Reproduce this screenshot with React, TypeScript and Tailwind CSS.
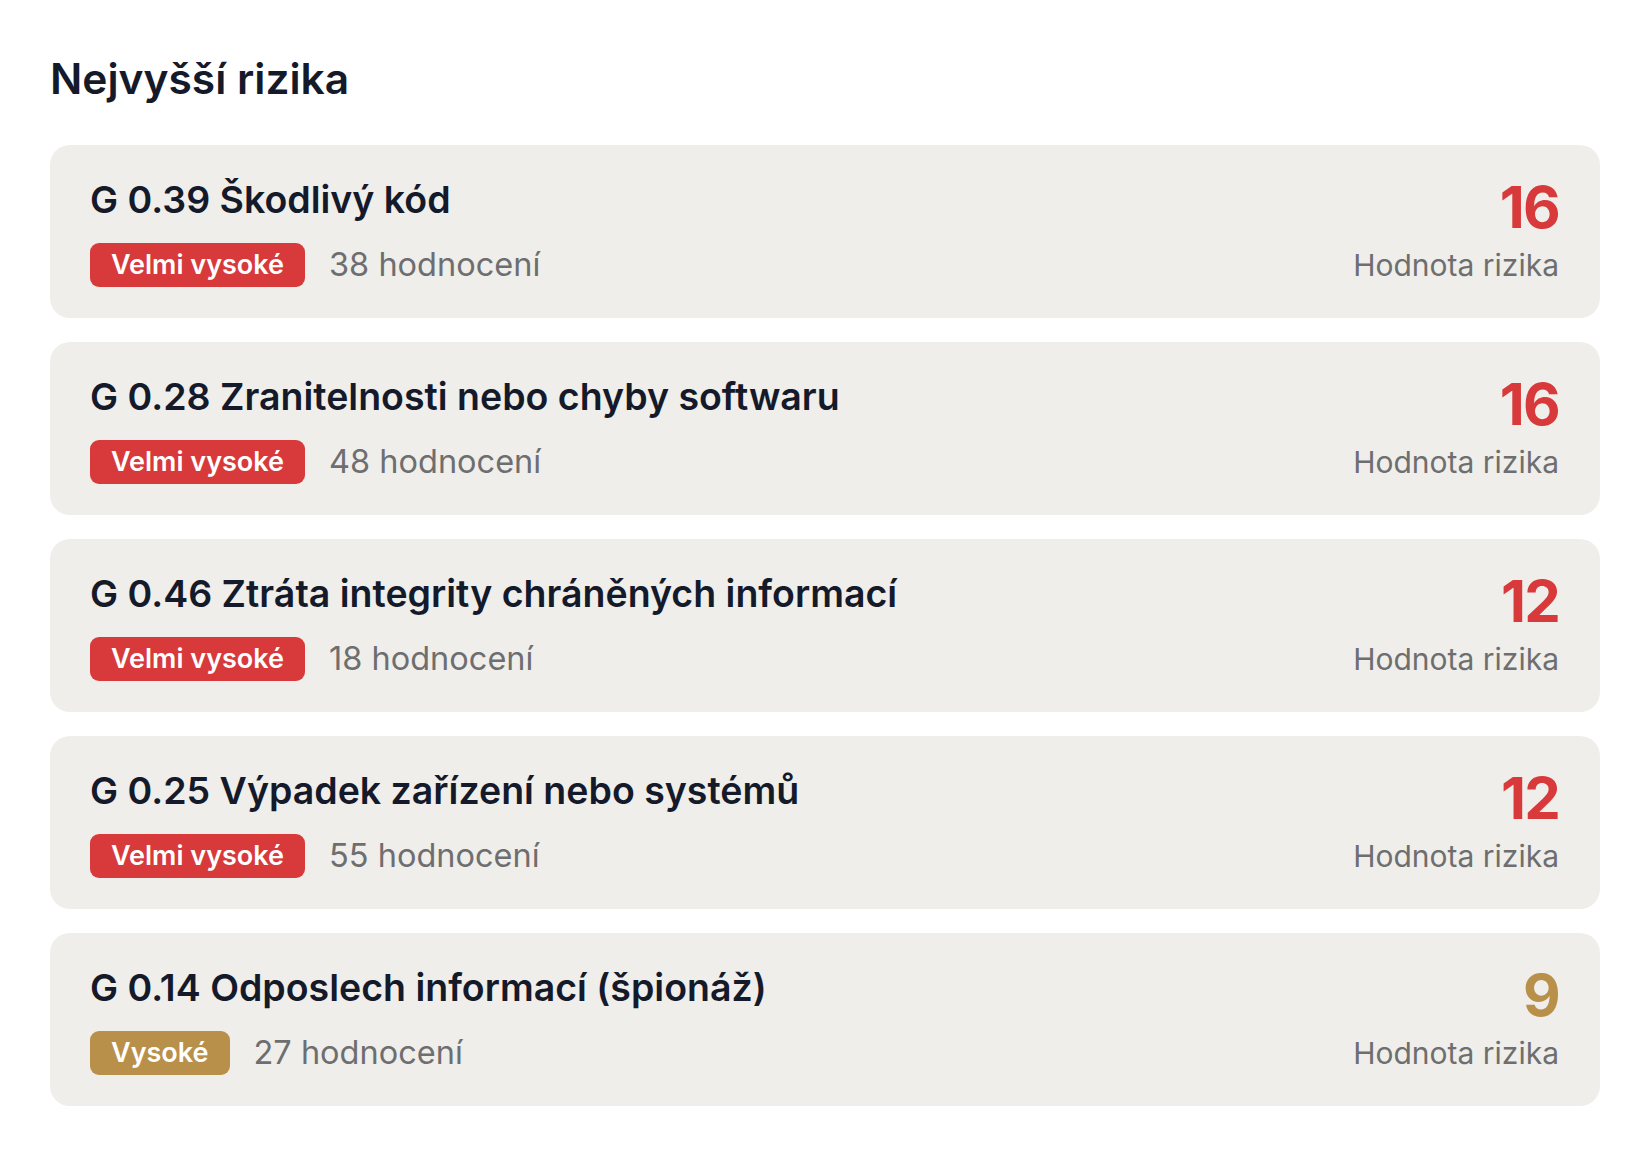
import React from 'react';

type Risk = { code: string; title: string; level: 'very-high' | 'high'; ratings: number; score: number };

const risks: Risk[] = [
    { code: 'G 0.39', title: 'Škodlivý kód', level: 'very-high', ratings: 38, score: 16 },
    { code: 'G 0.28', title: 'Zranitelnosti nebo chyby softwaru', level: 'very-high', ratings: 48, score: 16 },
    { code: 'G 0.46', title: 'Ztráta integrity chráněných informací', level: 'very-high', ratings: 18, score: 12 },
    { code: 'G 0.25', title: 'Výpadek zařízení nebo systémů', level: 'very-high', ratings: 55, score: 12 },
    { code: 'G 0.14', title: 'Odposlech informací (špionáž)', level: 'high', ratings: 27, score: 9 },
];

function RiskCard({ risk }: { risk: Risk }) {
    const veryHigh = risk.level === 'very-high';
    return (
        <div className="flex items-center justify-between rounded-[20px] bg-[#efeeea] pl-10 pr-[41px] pt-8 pb-[31px]">
            <div className="flex flex-col">
                <h3 className="text-[37.5px] leading-[45px] font-semibold text-[#151a2b]">
                    {risk.code} {risk.title}
                </h3>
                <div className="mt-[21px] flex items-center gap-[24px]">
                    <span
                        className={
                            veryHigh
                                ? 'h-[44px] px-[21px] rounded-[9px] bg-[#d8393b] text-white text-[27px] font-semibold flex items-center'
                                : 'h-[44px] px-[21px] rounded-[9px] bg-[#b8904a] text-white text-[27px] font-semibold flex items-center'
                        }
                    >
                        {veryHigh ? 'Velmi vysoké' : 'Vysoké'}
                    </span>
                    <span className="text-[32.5px] leading-[44px] text-[#6e6e70]">{risk.ratings} hodnocení</span>
                </div>
            </div>
            <div className="flex flex-col items-end">
                <span
                    className={
                        veryHigh
                            ? 'text-[58px] leading-none font-bold tracking-[-0.03em] text-[#d8393b]'
                            : 'text-[58px] leading-none font-bold tracking-[-0.03em] text-[#b8904a]'
                    }
                >
                    {risk.score}
                </span>
                <span className="mt-[8px] text-[30px] leading-[42px] text-[#6e6e70]">Hodnota rizika</span>
            </div>
        </div>
    );
}

export default function App() {
    return (
        <div className="min-h-screen bg-white pt-[54px] pl-[50px] pr-[50px] font-['Inter',sans-serif]">
            <h2 className="text-[42.5px] leading-[50px] font-semibold text-[#151a2b] mb-[41px]">Nejvyšší rizika</h2>
            <div className="flex flex-col gap-6">
                {risks.map(r => (
                    <RiskCard key={r.code} risk={r} />
                ))}
            </div>
        </div>
    );
}
